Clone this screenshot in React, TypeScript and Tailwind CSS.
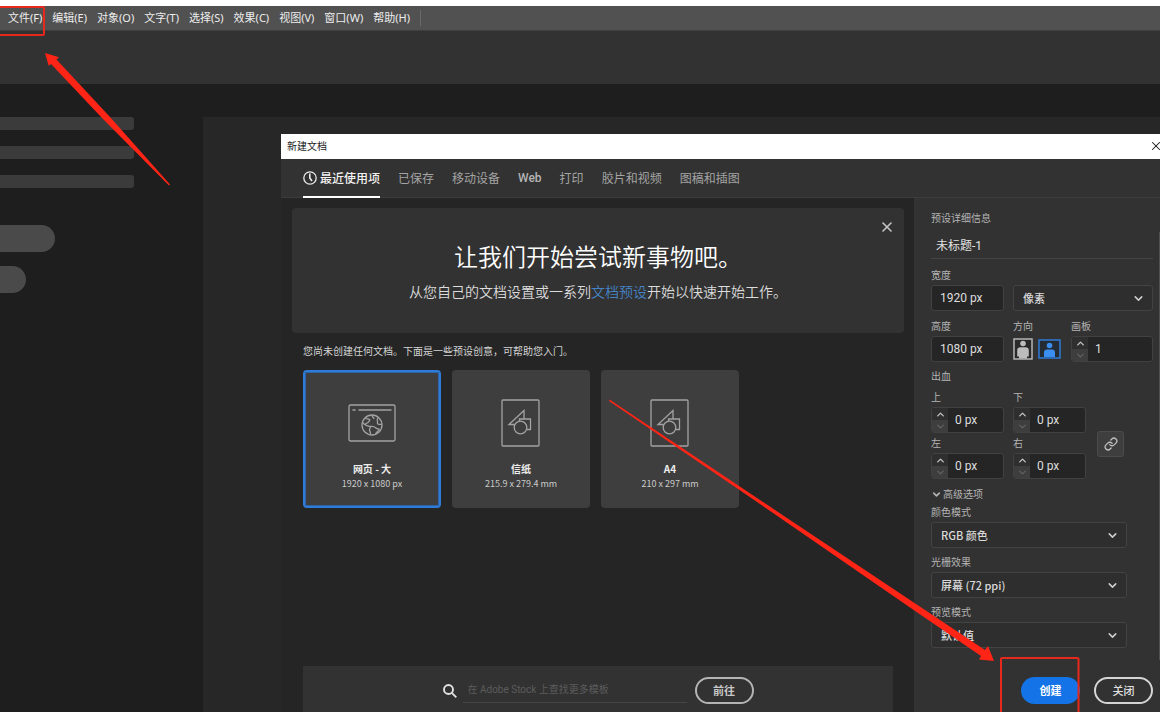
import React, { useId } from "react";
import { ChevronDown, ChevronUp, Link, X } from "lucide-react";

const menus = ["文件(F)", "编辑(E)", "对象(O)", "文字(T)", "选择(S)", "效果(C)", "视图(V)", "窗口(W)", "帮助(H)"];
const tabs = ["已保存", "移动设备", "Web", "打印", "胶片和视频", "图稿和插图"];

function FieldLabel({ htmlFor, children }: { htmlFor: string; children: React.ReactNode }) {
  return (
    <label htmlFor={htmlFor} className="block text-[10px] leading-[14px] text-[#b4b4b4]">
      {children}
    </label>
  );
}

function TextField({ label, value }: { label: string; value: string }) {
  const id = useId();
  return (
    <div className="flex w-[73px] flex-col gap-[3px]">
      <FieldLabel htmlFor={id}>{label}</FieldLabel>
      <input
        id={id}
        defaultValue={value}
        className="h-[26px] w-full rounded-[3px] border border-[#414141] bg-[#252525] px-2 font-['Roboto','Noto_Sans_CJK_SC',sans-serif] text-xs text-[#dedede] outline-none"
      />
    </div>
  );
}

function Spinner({ label, value, wide }: { label: string; value: string; wide?: boolean }) {
  const id = useId();
  return (
    <div className={wide ? "flex w-[82px] flex-col gap-[3px]" : "flex w-[73px] flex-col gap-[3px]"}>
      <FieldLabel htmlFor={id}>{label}</FieldLabel>
      <div className="flex h-[26px] overflow-hidden rounded-[3px] border border-[#414141] bg-[#252525]">
        <div className="flex w-4 shrink-0 flex-col">
          <button type="button" aria-label={label + " +"} className="flex flex-1 items-center justify-center bg-[#2f2f2f] text-[#c4c4c4]">
            <ChevronUp size={11} strokeWidth={3} />
          </button>
          <button type="button" aria-label={label + " -"} className="flex flex-1 items-center justify-center bg-[#3e3e3e] text-[#646464]">
            <ChevronDown size={11} strokeWidth={2.5} />
          </button>
        </div>
        <input
          id={id}
          defaultValue={value}
          className="w-full min-w-0 bg-transparent pl-[7px] font-['Roboto','Noto_Sans_CJK_SC',sans-serif] text-xs text-[#dedede] outline-none"
        />
      </div>
    </div>
  );
}

function Dropdown({ id, value, label }: { id?: string; value: string; label?: string }) {
  return (
    <div className="relative">
      <select
        id={id}
        aria-label={label}
        className="block h-[26px] w-full appearance-none rounded-[3px] border border-[#434343] bg-[#2e2e2e] pr-7 pl-[9px] text-[11px] font-medium text-[#dadada] outline-none"
      >
        <option>{value}</option>
      </select>
      <ChevronDown size={13} strokeWidth={2.8} className="pointer-events-none absolute top-[7px] right-2 text-[#cfcfcf]" />
    </div>
  );
}

function LabeledDropdown({ label, value }: { label: string; value: string }) {
  const id = useId();
  return (
    <div className="flex w-[196px] flex-col gap-[3px]">
      <FieldLabel htmlFor={id}>{label}</FieldLabel>
      <Dropdown id={id} value={value} />
    </div>
  );
}

function WebIcon() {
  return (
    <svg width="48" height="38" viewBox="0 0 48 38" fill="none" stroke="#a3a3a3" strokeWidth="1.3">
      <rect x="1" y="1" width="46" height="36" rx="1.5" />
      <path d="M4.5 6h3M10.500 6H43.500" />
      <circle cx="24" cy="21" r="10" />
      <path d="M17 14c1 1.500 3.500.5 4.500 1.500s-1 2-1.500 3-2.500.5-2.500 2 2.500 1 4 2 .5 2 0 3 1.500 2.500 1 5.500M14.500 18c1 1.500 1.500 3 3 2.500M24.500 11.500c-1 1 1.500 2 1.500 3.500M30.500 14c-1.500.5-1.500 2-1 3s-1 2 .5 3 2.500 0 3.500.5M22 22.500c2.500-.5 4.500 0 6 1.500s4 .5 3 2-3 1.500-3.500 4.500" />
    </svg>
  );
}

function PrintIcon() {
  return (
    <svg width="40" height="48" viewBox="0 0 40 48" fill="none" stroke="#a3a3a3" strokeWidth="1.3">
      <rect x="1" y="1" width="37" height="46" rx="1" />
      <path d="M13.500 25.500H8L23 11.500V20M18.500 22V20H29.500V30.500H25.500" />
      <circle cx="19.500" cy="28.500" r="6.300" />
    </svg>
  );
}

function Preset({ name, size, icon, selected }: { name: string; size: string; icon: React.ReactNode; selected?: boolean }) {
  return (
    <button
      type="button"
      aria-pressed={!!selected}
      className={
        selected
          ? "flex h-[138px] w-[138px] flex-col items-center rounded-[4px] border-2 border-[#2f7bd8] bg-[#3e3e3e] pt-[26px] outline-1 -outline-offset-3 outline-[#2e64a6]"
          : "flex h-[138px] w-[138px] flex-col items-center rounded-[4px] border-2 border-[#3e3e3e] bg-[#3e3e3e] pt-[26px]"
      }
    >
      <span className="flex h-[50px] items-center">{icon}</span>
      <span className="mt-[13px] text-[10px] leading-[16px] font-bold text-[#ececec]">{name}</span>
      <span className="text-[9px] leading-[14px] text-[#cacaca]">{size}</span>
    </button>
  );
}

function Sidebar() {
  return (
    <aside className="w-[203px] shrink-0">
      <div className="flex flex-col gap-4">
        <div className="h-[13px] w-[134px] rounded-r-[3px] bg-[#3b3b3b]" />
        <div className="h-[13px] w-[134px] rounded-r-[3px] bg-[#3b3b3b]" />
        <div className="h-[13px] w-[134px] rounded-r-[3px] bg-[#3b3b3b]" />
      </div>
      <div className="mt-[37px] flex flex-col gap-[14px]">
        <div className="h-[27px] w-[55px] rounded-r-full bg-[#4a4a4a]" />
        <div className="h-[27px] w-[26px] rounded-r-full bg-[#4a4a4a]" />
      </div>
    </aside>
  );
}

function DetailsPanel() {
  return (
    <form className="relative flex w-[246px] shrink-0 flex-col bg-[#323232] pt-[13px] pr-[7px] pb-2 pl-[17px]" onSubmit={(e) => e.preventDefault()}>
      <div className="absolute top-[34px] right-0 bottom-[52px] w-px bg-[#505050]" />
      <FieldLabel htmlFor="doc-name">预设详细信息</FieldLabel>
      <input
        id="doc-name"
        defaultValue="未标题-1"
        className="mt-[6px] h-7 w-full border-b border-[#454545] bg-transparent px-[5px] font-['Roboto','Noto_Sans_CJK_SC',sans-serif] text-xs text-[#e2e2e2] outline-none"
      />
      <div className="mt-[9px] flex items-end gap-[9px]">
        <TextField label="宽度" value="1920 px" />
        <div className="flex-1">
          <Dropdown label="单位" value="像素" />
        </div>
      </div>
      <div className="mt-2 flex items-end gap-[9px]">
        <TextField label="高度" value="1080 px" />
        <div className="flex flex-1 flex-col gap-[3px]">
          <span className="text-[10px] leading-[14px] text-[#b4b4b4]">方向</span>
          <div className="flex h-[26px] items-center gap-[5px]">
            <button type="button" aria-label="纵向">
              <svg width="20" height="22" viewBox="0 0 20 22">
                <rect x="1" y="1" width="18" height="20" fill="#292929" stroke="#b5b5b5" strokeWidth="1.500" />
                <circle cx="10" cy="5.500" r="2.800" fill="#bcbcbc" />
                <path d="M4.200 18.500V12.500Q4.200 9.300 7.500 9.300H12.500Q15.800 9.300 15.800 12.500V18.500H14V20.500H6V18.500Z" fill="#bcbcbc" />
              </svg>
            </button>
            <button type="button" aria-label="横向">
              <svg width="23" height="20" viewBox="0 0 23 20">
                <rect x="1" y="1" width="21" height="18" fill="#252b33" stroke="#2f7bd8" strokeWidth="1.500" />
                <circle cx="11.500" cy="6.500" r="2.800" fill="#3a8ef0" />
                <path d="M6 18V13.500Q6 10.500 9 10.500H14Q17 10.500 17 13.500V18Z" fill="#3a8ef0" />
              </svg>
            </button>
          </div>
        </div>
        <Spinner label="画板" value="1" wide />
      </div>
      <div className="mt-[7px] text-[10px] leading-[14px] text-[#b4b4b4]">出血</div>
      <div className="mt-[7px] flex items-center gap-[11px]">
        <div className="grid grid-cols-[73px_73px] gap-x-[9px] gap-y-[3px]">
          <Spinner label="上" value="0 px" />
          <Spinner label="下" value="0 px" />
          <Spinner label="左" value="0 px" />
          <Spinner label="右" value="0 px" />
        </div>
        <button type="button" aria-label="链接" className="mt-[18px] flex h-[26px] w-[27px] items-center justify-center rounded-[3px] border border-[#4c4c4c] bg-[#3e3e3e] text-[#c0c0c0]">
          <Link size={14} strokeWidth={2.2} />
        </button>
      </div>
      <button type="button" className="mt-2 flex items-center gap-[1px] self-start text-[10px] leading-[14px] text-[#b4b4b4]">
        <ChevronDown size={11} strokeWidth={3.5} />
        高级选项
      </button>
      <div className="mt-1 flex flex-col gap-[7px]">
        <LabeledDropdown label="颜色模式" value="RGB 颜色" />
        <LabeledDropdown label="光栅效果" value="屏幕 (72 ppi)" />
        <LabeledDropdown label="预览模式" value="默认值" />
      </div>
      <div className="mt-auto flex justify-end gap-[14px]">
        <button type="submit" className="h-[27px] w-[59px] rounded-full bg-[#1473e6] text-[11px] font-bold text-white">
          创建
        </button>
        <button type="button" className="h-[27px] w-[59px] rounded-full border-2 border-[#d5d5d5] text-[11px] font-medium text-[#e0e0e0]">
          关闭
        </button>
      </div>
    </form>
  );
}

function NewDocumentDialog() {
  return (
    <section role="dialog" aria-label="新建文档" className="flex min-w-0 flex-1 flex-col bg-[#252525]">
      <header className="flex h-[25px] items-center justify-between bg-white pb-px pl-[6px] text-[#1a1a1a]">
        <h1 className="text-[10px] leading-[14px]">新建文档</h1>
        <button type="button" aria-label="关闭窗口" className="-mr-[3px]">
          <X size={14} strokeWidth={1.8} />
        </button>
      </header>
      <nav className="flex h-[39px] gap-[18px] border-b border-[#3c3c3c] bg-[#323232] pl-[22px] text-xs">
        <button type="button" className="flex h-[39px] items-center gap-[3px] border-b-2 border-white font-medium text-[#f2f2f2]">
          <svg width="14" height="14" viewBox="0 0 14 14" fill="none" stroke="#ececec" strokeWidth="1.300">
            <circle cx="7" cy="7" r="6.200" />
            <path d="M6.800 2.500V7L9 10" strokeWidth="1.600" />
          </svg>
          最近使用项
        </button>
        {tabs.map((t) => (
          <button key={t} type="button" className={t === "Web" ? "font-['Roboto',sans-serif] font-medium text-[#b4b4b4]" : "text-[#a4a4a4]"}>
            {t}
          </button>
        ))}
      </nav>
      <div className="flex flex-1">
        <div className="flex min-w-0 flex-1 flex-col pt-[10px] pr-[10px] pl-[11px]">
          <div className="relative flex h-[125px] flex-col items-center rounded-[4px] bg-[#323232] pt-[30px]">
            <h2 className="text-2xl leading-9 font-[350] text-white">让我们开始尝试新事物吧。</h2>
            <p className="mt-[7px] text-sm leading-5 font-[350] text-[#dcdcdc]">
              从您自己的文档设置或一系列
              <a href="#presets" className="text-[#4583c4]">文档预设</a>
              开始以快速开始工作。
            </p>
            <button type="button" aria-label="关闭提示" className="absolute top-[11px] right-[9px] text-[#c6c6c6]">
              <X size={16} strokeWidth={2.4} />
            </button>
          </div>
          <div id="presets" className="pt-[11px] pl-[11px]">
            <p className="text-[10px] leading-[14px] text-[#d4d4d4]">您尚未创建任何文档。下面是一些预设创意，可帮助您入门。</p>
            <div className="mt-3 flex flex-wrap gap-[11px]">
              <Preset name="网页 - 大" size="1920 x 1080 px" icon={<WebIcon />} selected />
              <Preset name="信纸" size="215.9 x 279.4 mm" icon={<PrintIcon />} />
              <Preset name="A4" size="210 x 297 mm" icon={<PrintIcon />} />
            </div>
          </div>
          <form className="mt-auto mr-[11px] ml-[11px] flex justify-center bg-[#323232] pt-[11px] pb-2" onSubmit={(e) => e.preventDefault()}>
            <label htmlFor="stock-search" aria-label="搜索" className="flex h-[27px] items-center">
              <svg width="14" height="14" viewBox="0 0 14 14" fill="none" stroke="#e2e2e2" strokeWidth="1.900">
                <circle cx="5.500" cy="5.500" r="4.500" />
                <path d="M8.800 8.800L13.300 13.300" />
              </svg>
            </label>
            <input
              id="stock-search"
              placeholder="在 Adobe Stock 上查找更多模板"
              className="ml-[6px] h-[26px] w-[224px] border-b border-[#454545] bg-transparent pl-[5px] font-['Roboto','Noto_Sans_CJK_SC',sans-serif] text-[10px] text-[#cccccc] outline-none placeholder:text-[#5c5c5c] placeholder:opacity-100"
            />
            <button type="submit" className="ml-2 h-[27px] w-[59px] rounded-full border-2 border-[#b4b4b4] text-[11px] font-bold text-[#c8c8c8]">
              前往
            </button>
          </form>
        </div>
        <DetailsPanel />
      </div>
    </section>
  );
}

function Annotations() {
  return (
    <svg className="pointer-events-none absolute top-0 left-0" width="1160" height="712" viewBox="0 0 1160 712" aria-hidden="true">
      <g fill="none" stroke="#e6281d" strokeWidth="2">
        <rect x="-4" y="7" width="48" height="28" rx="1" />
        <rect x="1001" y="658" width="77.500" height="70" rx="1" />
      </g>
      <g fill="#fe2416">
        <polygon points="45,53 59,57.3 56.5,59.5 110,117 170,184.5 169,185.5 103,119 51,64 48.7,65.7" />
        <polygon points="609.5,399.5 760,500 985,650 988,646 994,661 979,659.5 981,656 910,607.500 760,504 609,401" />
      </g>
    </svg>
  );
}

export default function App() {
  return (
    <div className="relative flex min-h-screen flex-col overflow-hidden border-t-6 border-white bg-[#1e1e1e] font-['Noto_Sans_CJK_SC',sans-serif]">
      <nav className="flex h-[25px] items-center gap-[10px] border-b border-[#3e3e3e] bg-[#515151] pb-px pl-2 font-['Noto_Sans','Noto_Sans_CJK_SC',sans-serif] text-[11px] text-[#ededed]">
        {menus.map((m) => (
          <button key={m} type="button" className="leading-4">
            {m}
          </button>
        ))}
        <div className="h-4 w-px bg-[#6a6a6a]" />
      </nav>
      <div className="h-[53px] bg-[#323232]" />
      <div className="flex flex-1 pt-[33px]">
        <Sidebar />
        <main className="flex min-w-0 flex-1 bg-[#272727] pt-[17px] pl-[78px]">
          <NewDocumentDialog />
        </main>
      </div>
      <div className="absolute -top-[6px] left-0">
        <Annotations />
      </div>
    </div>
  );
}
